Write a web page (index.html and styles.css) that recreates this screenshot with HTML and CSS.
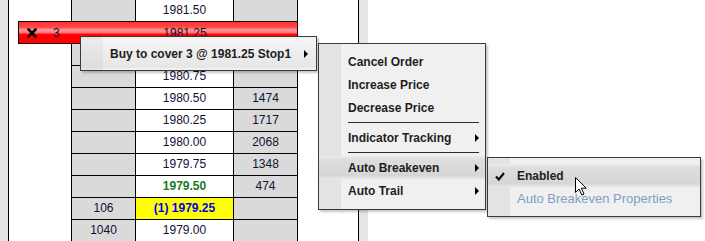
FILE: index.html
```html
<!DOCTYPE html>
<html lang="en">
<head>
    <meta charset="UTF-8">
    <title>Price Ladder - Order Menu</title>
    <link rel="stylesheet" href="styles.css">
</head>
<body>
    <div class="screen">
        <div class="edge"></div>
        <div class="spacer-left"></div>

        <div class="ladder">
            <div class="row"><div class="cell bid"></div><div class="cell price">1981.50</div><div class="cell ask"></div></div>
            <div class="row"><div class="cell bid"></div><div class="cell price"></div><div class="cell ask"></div></div>
            <div class="row"><div class="cell bid"></div><div class="cell price"></div><div class="cell ask"></div></div>
            <div class="row"><div class="cell bid"></div><div class="cell price">1980.75</div><div class="cell ask"></div></div>
            <div class="row"><div class="cell bid"></div><div class="cell price">1980.50</div><div class="cell ask">1474</div></div>
            <div class="row"><div class="cell bid"></div><div class="cell price">1980.25</div><div class="cell ask">1717</div></div>
            <div class="row"><div class="cell bid"></div><div class="cell price">1980.00</div><div class="cell ask">2068</div></div>
            <div class="row"><div class="cell bid"></div><div class="cell price">1979.75</div><div class="cell ask">1348</div></div>
            <div class="row"><div class="cell bid"></div><div class="cell price last-trade">1979.50</div><div class="cell ask">474</div></div>
            <div class="row"><div class="cell bid">106</div><div class="cell price my-order">(1) 1979.25</div><div class="cell ask"></div></div>
            <div class="row"><div class="cell bid">1040</div><div class="cell price">1979.00</div><div class="cell ask"></div></div>
        </div>

        <div class="spacer-right"></div>
        <div class="scroll-edge"></div>
        <div class="chart-area"></div>

        <!-- working order marker -->
        <div class="order-bar">
            <span class="ob-icon">
                <svg width="10" height="10" viewBox="0 0 10 10">
                    <path d="M1.5 1.5 L8.5 8.5 M8.5 1.5 L1.5 8.5" stroke="#000" stroke-width="2.6" stroke-linecap="square"/>
                </svg>
            </span>
            <span class="ob-qty">3</span>
            <span class="ob-price">1981.25</span>
        </div>

        <!-- context menus -->
        <div class="menu menu-order">
            <div class="menu-item active">Buy to cover 3 @ 1981.25 Stop1<span class="arrow"></span></div>
        </div>

        <div class="menu menu-actions">
            <div class="menu-item">Cancel Order</div>
            <div class="menu-item">Increase Price</div>
            <div class="menu-item">Decrease Price</div>
            <div class="menu-sep"></div>
            <div class="menu-item">Indicator Tracking<span class="arrow"></span></div>
            <div class="menu-sep"></div>
            <div class="menu-item active">Auto Breakeven<span class="arrow"></span></div>
            <div class="menu-item">Auto Trail<span class="arrow"></span></div>
        </div>

        <div class="menu menu-breakeven">
            <div class="menu-item active">
                <svg class="check" width="10" height="9" viewBox="0 0 10 9">
                    <path d="M1 4.5 L3.8 7.5 L9 1" fill="none" stroke="#111" stroke-width="2.2"/>
                </svg>
                Enabled
            </div>
            <div class="menu-item disabled">Auto Breakeven Properties</div>
        </div>

        <svg class="cursor" width="13" height="19" viewBox="0 0 13 19">
            <path d="M0.5 0.5 L0.5 15.5 L4 12 L6.8 18 L9 17 L6.3 11.2 L11.2 11.2 Z" fill="#fff" stroke="#000" stroke-width="1"/>
        </svg>
    </div>
</body>
</html>
```

FILE: styles.css
```css
body {
    margin: 0;
    font-family: "Liberation Sans", Arial, sans-serif;
    font-size: 12px;
    color: #111133;
    background: #fff;
}
.screen {
    position: relative;
    display: flex;
    height: 241px;
    overflow: hidden;
    background: #fff;
}
.edge {
    width: 8px;
    background: #e4e4e4;
    border-right: 1px solid #000;
}
.spacer-left {
    width: 62px;
}
.ladder {
    width: 225px;
    border-left: 1px solid #000;
    border-right: 1px solid #000;
}
.row {
    display: flex;
    height: 22px;
    box-sizing: border-box;
    border-bottom: 1px solid #000;
}
.cell {
    line-height: 21px;
    text-align: center;
    box-sizing: border-box;
}
.bid {
    width: 64px;
    background: #dadada;
    border-right: 1px solid #000;
}
.price {
    width: 98px;
    border-right: 1px solid #000;
}
.ask {
    width: 63px;
    background: #dadada;
}
.last-trade {
    color: #1b7a1b;
    font-weight: bold;
}
.my-order {
    background: #ffff00;
    color: #0000ee;
    font-weight: bold;
}
.spacer-right {
    width: 60px;
    border-right: 1px solid #000;
}
.scroll-edge {
    width: 9px;
    background: #e6e6e6;
}
.chart-area {
    flex: 1;
}

/* order marker sitting over the ladder */
.order-bar {
    position: absolute;
    left: 18px;
    top: 21px;
    width: 280px;
    height: 23px;
    box-sizing: border-box;
    border: 1px solid #1a0000;
    display: flex;
    align-items: center;
    background: linear-gradient(#ff3030 0%, #ff4848 25%, #ff9a9a 38%, #ff7878 50%, #ff0000 60%, #ff0000 100%);
}
.ob-icon {
    width: 34px;
    box-sizing: border-box;
    padding-left: 8px;
    display: flex;
}
.ob-qty {
    width: 83px;
}
.ob-price {
    width: 98px;
    text-align: center;
}

/* popup menus */
.menu {
    position: absolute;
    box-sizing: border-box;
    border: 1px solid #3a3a3a;
    background: linear-gradient(to right, #e3e3e3 22px, #f0f0f0 22px);
    box-shadow: 2px 2px 2px rgba(0,0,0,0.22);
    font-weight: bold;
    color: #1e1e1e;
}
.menu-order {
    left: 80px;
    top: 36px;
    width: 237px;
    height: 35px;
    padding: 2px 0;
}
.menu-order .menu-item {
    height: 29px;
    padding-right: 8px;
}
.menu-actions {
    left: 318px;
    top: 43px;
    width: 168px;
    height: 167px;
    padding: 6px 0;
}
.menu-breakeven {
    left: 487px;
    top: 157px;
    width: 214px;
    height: 60px;
    padding: 6px 0;
}
.menu-item {
    position: relative;
    display: flex;
    align-items: center;
    height: 23px;
    padding-left: 29px;
    padding-right: 6px;
}
.menu-item.active {
    background: linear-gradient(#ececec 0%, #dedede 15%, #d6d6d6 85%, #e8e8e8 100%);
}
.menu-order .menu-item.active {
    background: linear-gradient(to right, rgba(0,0,0,0.04) 22px, transparent 22px), linear-gradient(#f6f6f6 0%, #ededed 50%, #e6e6e6 100%);
}
.menu-item.disabled {
    color: #7f9fc0;
    font-weight: normal;
    font-size: 13px;
}
.arrow {
    margin-left: auto;
    width: 0;
    height: 0;
    border-left: 4px solid #000;
    border-top: 4px solid transparent;
    border-bottom: 4px solid transparent;
}
.menu-sep {
    height: 7px;
    margin: 0 6px 0 29px;
    background: linear-gradient(transparent 3px, #2a2a2a 3px, #2a2a2a 4px, transparent 4px);
}
.check {
    position: absolute;
    left: 7px;
    top: 8px;
}
.cursor {
    position: absolute;
    left: 575px;
    top: 177px;
}
```
